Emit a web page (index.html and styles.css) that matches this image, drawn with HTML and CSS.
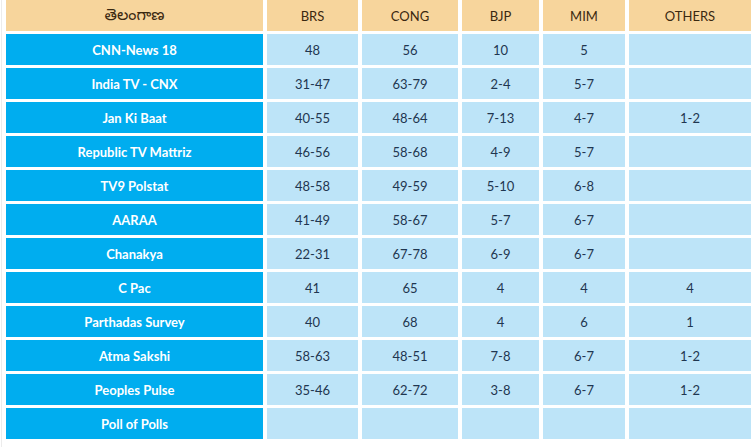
FILE: index.html
```html
<!DOCTYPE html>
<html lang="te">
<head>
<meta charset="utf-8">
<title>Telangana Exit Polls</title>
<link rel="stylesheet" href="styles.css">
</head>
<body>
<div class="page">
  <div class="grid">
    <div class="head head-first">తెలంగాణ</div>
    <div class="head">BRS</div>
    <div class="head">CONG</div>
    <div class="head">BJP</div>
    <div class="head">MIM</div>
    <div class="head">OTHERS</div>

    <div class="name">CNN-News 18</div><div class="val">48</div><div class="val">56</div><div class="val">10</div><div class="val">5</div><div class="val"></div>
    <div class="name">India TV - CNX</div><div class="val">31-47</div><div class="val">63-79</div><div class="val">2-4</div><div class="val">5-7</div><div class="val"></div>
    <div class="name">Jan Ki Baat</div><div class="val">40-55</div><div class="val">48-64</div><div class="val">7-13</div><div class="val">4-7</div><div class="val">1-2</div>
    <div class="name">Republic TV Mattriz</div><div class="val">46-56</div><div class="val">58-68</div><div class="val">4-9</div><div class="val">5-7</div><div class="val"></div>
    <div class="name">TV9 Polstat</div><div class="val">48-58</div><div class="val">49-59</div><div class="val">5-10</div><div class="val">6-8</div><div class="val"></div>
    <div class="name">AARAA</div><div class="val">41-49</div><div class="val">58-67</div><div class="val">5-7</div><div class="val">6-7</div><div class="val"></div>
    <div class="name">Chanakya</div><div class="val">22-31</div><div class="val">67-78</div><div class="val">6-9</div><div class="val">6-7</div><div class="val"></div>
    <div class="name">C Pac</div><div class="val">41</div><div class="val">65</div><div class="val">4</div><div class="val">4</div><div class="val">4</div>
    <div class="name">Parthadas Survey</div><div class="val">40</div><div class="val">68</div><div class="val">4</div><div class="val">6</div><div class="val">1</div>
    <div class="name">Atma Sakshi</div><div class="val">58-63</div><div class="val">48-51</div><div class="val">7-8</div><div class="val">6-7</div><div class="val">1-2</div>
    <div class="name">Peoples Pulse</div><div class="val">35-46</div><div class="val">62-72</div><div class="val">3-8</div><div class="val">6-7</div><div class="val">1-2</div>
    <div class="name">Poll of Polls</div><div class="val"></div><div class="val"></div><div class="val"></div><div class="val"></div><div class="val"></div>
  </div>
</div>
</body>
</html>
```

FILE: styles.css
```css
html, body {
  margin: 0;
  padding: 0;
  background: #ffffff;
}

.page {
  width: 756px;
  height: 447px;
  box-sizing: border-box;
  padding: 0 6px 0 5px;
  border-left: 1px solid #ececec;
  margin-left: 1px;
  font-family: Lato, "Noto Sans", sans-serif;
  font-size: 13px;
}

.grid {
  display: grid;
  grid-template-columns: 257px 91px 96px 77px 82px 122px;
  grid-template-rows: repeat(13, 31px);
  column-gap: 4px;
  row-gap: 3px;
  margin-left: -1px;
}

.grid > div {
  display: flex;
  align-items: center;
  justify-content: center;
  white-space: nowrap;
}

.head {
  background: #f7d59c;
  color: #3a2810;
}

.head-first {
  font-family: "Noto Sans Telugu", "Noto Sans", sans-serif;
  font-size: 16px;
  padding-top: 3px;
  box-sizing: border-box;
}

.name {
  background: #00adef;
  color: #ffffff;
  font-weight: 700;
}

.val {
  background: #bde4f8;
  color: #1f3650;
}
```
